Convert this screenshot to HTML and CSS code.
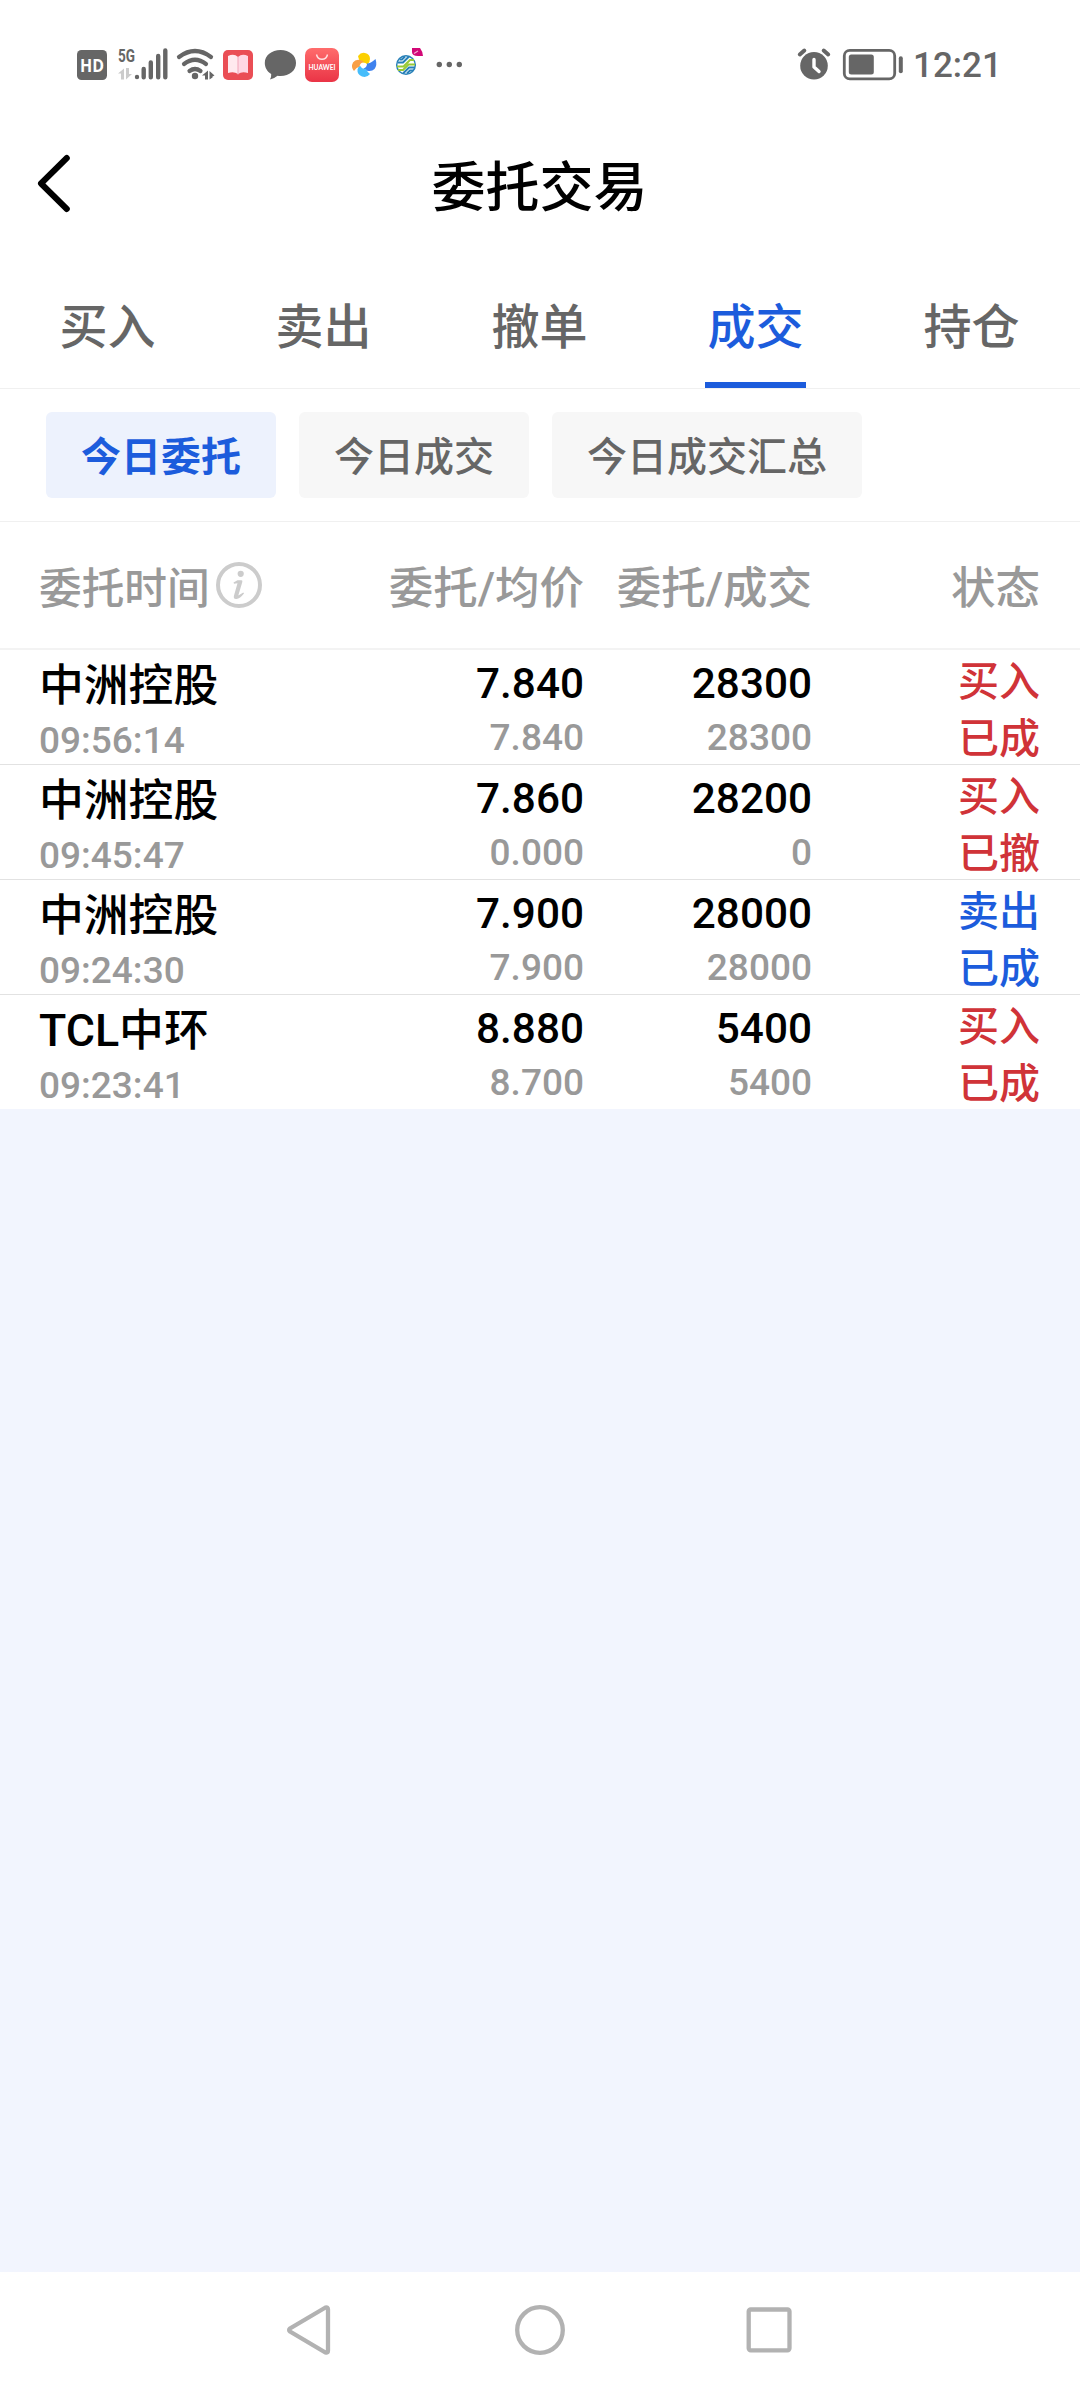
FILE: index.html
```html
<!DOCTYPE html>
<html lang="zh-CN">
<head>
<meta charset="utf-8">
<title>委托交易</title>
<link rel="stylesheet" href="styles.css">
</head>
<body>
<div class="statusbar">
  <div class="status-icons">
    <svg width="38" height="50" viewBox="74 40 38 50"><rect x="77" y="50" width="30" height="30" rx="4.5" fill="#666"/><text x="92" y="72" class="hd-text" textLength="24" lengthAdjust="spacingAndGlyphs">HD</text></svg>
    <svg width="60" height="50" viewBox="112 40 60 50">
      <text x="118" y="62" class="net-text" textLength="17" lengthAdjust="spacingAndGlyphs">5G</text>
      <path d="M118 73.500l6-5v11h-3v-6zM126 68v11.500l6-5.500h-3v-6z" fill="#ccc"/>
      <path d="M137 77v.1M143.700 69v8.200M150.800 62.500v14.700M158.200 56v21.200M165.300 50.500v26.700" stroke="#666" stroke-width="4.400" stroke-linecap="round"/>
    </svg>
    <svg width="48" height="50" viewBox="172 40 48 50">
      <path d="M179 57q16-12 32 0M184 64q11-8.500 22 0M189.500 71q5.500-4 11 0" fill="none" stroke="#666" stroke-width="4.200" stroke-linecap="round"/>
      <circle cx="195" cy="76" r="3.200" fill="#666"/>
      <path d="M202 75.500l6-5v9h-3v-4zM209.500 71l5 4.500-2 1v1l-3 2z" fill="#666"/>
    </svg>
    <svg width="40" height="50" viewBox="220 40 40 50">
      <rect x="223" y="50" width="30" height="30" rx="5" fill="#ea4e55"/>
      <path d="M228 56q6-3 10 1v17q-4-3-10-1z" fill="#ffe9ee"/><path d="M248 56q-6-3-10 1v17q4-3 10-1z" fill="#ffd8e4"/>
      <path d="M238 56.500v18" stroke="#f0a5b8" stroke-width="1"/>
    </svg>
    <svg width="40" height="50" viewBox="260 40 40 50"><path d="M280.500 50c9 0 15.500 5.500 15.500 13s-6.500 13-15.500 13q-1.500 0-3-.2q-3 2.700-7.500 3.700 1.500-2.500 1.200-5.500c-4-2.500-6.400-6.300-6.400-11 0-7.500 6.700-13 15.700-13z" fill="#666"/></svg>
    <svg width="44" height="50" viewBox="300 40 44 50">
      <defs><linearGradient id="shop" x1="0" y1="0" x2="0" y2="1"><stop offset="0" stop-color="#ff6c6c"/><stop offset="1" stop-color="#ea3446"/></linearGradient></defs>
      <rect x="305" y="48" width="34" height="34" rx="7" fill="url(#shop)"/>
      <path d="M316.500 54.500q1 4.800 5.500 4.800t5.500-4.800" fill="none" stroke="#ffe1e1" stroke-width="1.400"/>
      <text x="322" y="69.700" class="shop-text" textLength="27" lengthAdjust="spacingAndGlyphs">HUAWEI</text>
    </svg>
    <svg width="42" height="50" viewBox="344 40 42 50">
      <path d="M358 56q3-4 7-3 5 1 5 6 0 3-2.500 5.500-2-2.500-6-2-2.500-1.500-3.500-6.500z" fill="#fcd000"/>
      <path d="M375.500 59q2 6-1 10-3 3-8 1.500-2-.5-3-2 3.500-1 3.500-5 3.500 0 8.500-4.500z" fill="#3f82ee"/>
      <path d="M370 74q-3 4-8 2.500-5-2-4.500-7 .5-2.500 2.500-4 1.500 3.500 6 3.500 1 2.500 4 5z" fill="#46bdfb"/>
      <path d="M354 71q-3.500-4-1-8.500 2.500-3.500 7-2.500 3 .5 4 2-4 .5-4.500 4.500-3.500 1-5.500 4.500z" fill="#f9a047"/>
    </svg>
    <svg width="42" height="50" viewBox="386 40 42 50">
      <circle cx="406" cy="65" r="9.300" fill="none" stroke="#2780b8" stroke-width="1.500"/>
      <path d="M397.500 62.500h5.500l6-6M399.500 59.500h2.500l3-3M414.500 67.500h-5.500l-6 6M413 70.500h-3l-3 3" fill="none" stroke="#2780b8" stroke-width="2"/>
      <path d="M397 66.500h6.500l6.500-6.500h4M398 70h5l5.500-5.500h6.500" fill="none" stroke="#98c936" stroke-width="2"/>
      <path d="M412 48h8q3 4 3 8h-5q-6 0-6-4z" fill="#d20876"/><path d="M414 53.500l4-2.500" stroke="#f2a9cf" stroke-width="1.200"/>
    </svg>
    <svg width="40" height="50" viewBox="428 40 40 50" fill="#666"><circle cx="439.300" cy="64.500" r="2.700"/><circle cx="449.300" cy="64.500" r="2.700"/><circle cx="459.300" cy="64.500" r="2.700"/></svg>
  </div>
  <div class="status-right">
    <svg width="110" height="50" viewBox="796 40 110 50">
      <circle cx="815" cy="65.700" r="13.800" fill="#666"/>
      <path d="M800.800 54.500l4.500-4M829.200 54.500l-4.500-4" stroke="#666" stroke-width="4" stroke-linecap="round"/>
      <path d="M815 59.500v7.500l5 4.500" fill="none" stroke="#fff" stroke-width="3.400" stroke-linecap="round" stroke-linejoin="round"/>
      <rect x="845.300" y="50.300" width="50.400" height="28.600" rx="5.500" fill="none" stroke="#666" stroke-width="2.800"/>
      <rect x="849.800" y="54.500" width="25" height="20" rx="2.500" fill="#666"/>
      <rect x="899.800" y="56.300" width="4" height="17" rx="2" fill="#666"/>
    </svg>
    <span class="clock">12:21</span>
  </div>
</div>
<header class="titlebar">
  <svg class="back" width="44" height="68" viewBox="32 150 44 68"><path d="M66.800 158L41 183.500 66.800 209" fill="none" stroke="#000" stroke-width="6" stroke-linecap="round" stroke-linejoin="round"/></svg>
  <h1>委托交易</h1>
</header>
<nav class="tabs">
  <a>买入</a><a>卖出</a><a>撤单</a><a class="active">成交</a><a>持仓</a>
</nav>
<div class="chips">
  <span class="chip selected">今日委托</span><span class="chip">今日成交</span><span class="chip">今日成交汇总</span>
</div>
<main class="orders">
  <div class="row head">
    <div class="head-time">委托时间<svg width="48" height="48" viewBox="0 0 48 48"><circle cx="24" cy="24" r="21" fill="none" stroke="#ccc" stroke-width="4"/><circle cx="25.700" cy="12.800" r="3.100" fill="#ccc"/><path d="M18.500 21.500l4-2.300h4q1.300 0 .8 1.800l-4 13.500 5-3 .7 1q-4 5-7.500 5.500-3.500.3-2.500-3.500l3.500-12.300-3.500.5z" fill="#ccc"/></svg></div>
    <div>委托/均价</div><div>委托/成交</div><div>状态</div>
  </div>
  <div class="row order">
    <div class="stock"><b>中洲控股</b><small>09:56:14</small></div>
    <div class="num"><b>7.840</b><small>7.840</small></div>
    <div class="num"><b>28300</b><small>28300</small></div>
    <div class="state buy"><span>买入</span><span>已成</span></div>
  </div>
  <div class="row order">
    <div class="stock"><b>中洲控股</b><small>09:45:47</small></div>
    <div class="num"><b>7.860</b><small>0.000</small></div>
    <div class="num"><b>28200</b><small>0</small></div>
    <div class="state buy"><span>买入</span><span>已撤</span></div>
  </div>
  <div class="row order">
    <div class="stock"><b>中洲控股</b><small>09:24:30</small></div>
    <div class="num"><b>7.900</b><small>7.900</small></div>
    <div class="num"><b>28000</b><small>28000</small></div>
    <div class="state sell"><span>卖出</span><span>已成</span></div>
  </div>
  <div class="row order">
    <div class="stock"><b>TCL中环</b><small>09:23:41</small></div>
    <div class="num"><b>8.880</b><small>8.700</small></div>
    <div class="num"><b>5400</b><small>5400</small></div>
    <div class="state buy"><span>买入</span><span>已成</span></div>
  </div>
</main>
<footer class="sysnav">
  <svg width="60" height="60" viewBox="280 2300 60 60"><path d="M325.500 2307.500L290 2328.500q-1.800 1.500 0 3L325.500 2352.500q2.500.8 2.500-2v-41q0-2.800-2.500-2z"/></svg>
  <svg width="60" height="60" viewBox="510 2300 60 60"><circle cx="540" cy="2330" r="22.800"/></svg>
  <svg width="60" height="60" viewBox="739 2300 60 60"><rect x="748.700" y="2309.500" width="40.800" height="40.800" rx="2"/></svg>
</footer>
</body>
</html>
```
FILE: styles.css
```css
* { box-sizing: border-box; }
body {
  margin: 0;
  width: 1080px;
  height: 2388px;
  display: flex;
  flex-direction: column;
  background: #f2f5fe;
  font-family: Roboto, "Noto Sans CJK SC", sans-serif;
  font-weight: 500;
  color: #000;
}
svg { display: block; flex: none; }
b, small { font-weight: 500; }

.statusbar {
  height: 130px;
  padding: 40px 0 0 74px;
  background: #fff;
  display: flex;
}
.status-icons { display: flex; }
.status-right { display: flex; margin-left: 327px; }
.clock {
  margin-left: 8px;
  padding-top: 1px;
  color: #666;
  font-size: 35px;
  line-height: 50px;
}
.hd-text { font: 700 18px "Open Sans", sans-serif; fill: #fff; text-anchor: middle; }
.net-text { font: 700 18px Roboto, sans-serif; fill: #666; }
.shop-text { font: 700 7.500px Lato, sans-serif; fill: #fff; text-anchor: middle; }

.titlebar {
  height: 130px;
  padding: 20px 32px 0;
  background: #fff;
  display: flex;
}
.titlebar h1 {
  flex: 1;
  margin: 0 45px 0 0;
  padding-top: 5px;
  font-size: 54px;
  font-weight: 500;
  line-height: 68px;
  text-align: center;
}

.tabs {
  height: 129px;
  background: #fff;
  border-bottom: 1px solid #f0f0f0;
  display: grid;
  grid-template-columns: repeat(5, 1fr);
  justify-items: center;
}
.tabs a {
  width: 101px;
  margin-right: 1px;
  padding-top: 33px;
  color: #666;
  font-size: 48px;
  line-height: 70px;
  text-align: center;
}
.tabs .active { color: #1c5cdc; border-bottom: 6px solid #1c5cdc; }

.chips {
  height: 133px;
  padding: 23px 46px 0;
  background: #fff;
  border-bottom: 1px solid #f0f0f0;
  display: flex;
  align-items: flex-start;
  gap: 23px;
}
.chip {
  padding: 3px 35px 0;
  border-radius: 6px;
  background: #f7f7f7;
  color: #666;
  font-size: 40px;
  line-height: 83px;
  height: 86px;
}
.chip:not(.selected), .chip.selected { padding-top: 4px; }
.chip.selected { background: #edf2fd; color: #1c5cdc; font-weight: 700; }

.orders { background: #fff; }
.row {
  display: grid;
  grid-template-columns: 300px 245px 228px 228px;
  padding: 0 40px 0 39px;
  text-align: right;
}
.head {
  height: 128px;
  border-bottom: 2px solid #f3f3f3;
  color: #999;
  font-size: 44.500px;
  line-height: 134px;
}
.head-time { display: flex; font-size: 42.700px; }
.head-time svg { margin: 39px 0 0 5px; }

.order { height: 115px; border-bottom: 1px solid #e2e2e2; }
.order:last-child { height: 114px; border-bottom: 0; }
.order > div { display: flex; flex-direction: column; }
.order small { color: #999; font-size: 37px; }
.stock { text-align: left; }
.order .stock b { height: 67px; font-size: 44.800px; line-height: 72px; }
.stock small { line-height: 48px; }
.num b { font-size: 42.300px; line-height: 68px; }
.num small { line-height: 39px; }
.order .state { padding-top: 4px; font-size: 41px; line-height: 56.500px; }
.buy { color: #d03338; }
.sell { color: #1c5cdc; }

.sysnav {
  height: 116px;
  margin-top: auto;
  padding: 28px 281px 0 280px;
  background: #fff;
  display: flex;
  justify-content: space-between;
}
.sysnav svg { fill: none; stroke: #b2b2b2; stroke-width: 4.300px; }
```
